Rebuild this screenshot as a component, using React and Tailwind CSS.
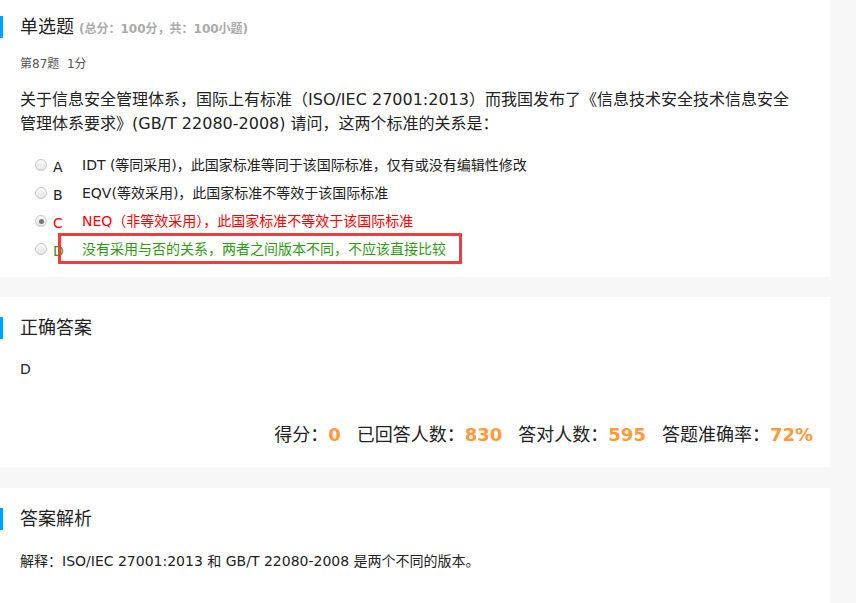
import React from "react";

const FONT = { fontFamily: '"DejaVu Sans", "Noto Sans CJK SC", sans-serif' };

const options = [
  { key: "A", text: "IDT (等同采用)，此国家标准等同于该国际标准，仅有或没有编辑性修改", color: "text-[#222]" },
  { key: "B", text: "EQV(等效采用)，此国家标准不等效于该国际标准", color: "text-[#222]" },
  { key: "C", text: "NEQ（非等效采用），此国家标准不等效于该国际标准", color: "text-[#ff0000]", checked: true },
  { key: "D", text: "没有采用与否的关系，两者之间版本不同，不应该直接比较", color: "text-[#2f9a12]", boxed: true },
];

const SectionTitle = ({ children, extra }) => (
  <div className="flex items-center h-[22px] border-l-[3px] border-[#0a9cff] pl-[17px]">
    <span className="text-[18px] text-[#222] leading-none">{children}</span>
    {extra && <span className="ml-[5px] text-[12px] text-[#aaa] font-bold leading-none mt-[3px]">{extra}</span>}
  </div>
);

const Radio = ({ checked }) => (
  <span className="w-[12px] h-[12px] rounded-full border border-[#c8c8c8] bg-gradient-to-b from-[#fafafa] to-[#e4e4e4] flex items-center justify-center">
    {checked && <span className="w-[5px] h-[5px] rounded-full bg-[#777]" />}
  </span>
);

const App = () => {
  return (
    <div className="w-[856px] h-[603px] overflow-hidden bg-[#f7f7f7]" style={FONT}>
      <div className="w-[830px]">
        {/* Question */}
        <div className="bg-white pt-[16px] h-[277px]">
          <SectionTitle extra="(总分：100分，共：100小题)">单选题</SectionTitle>
          <div className="px-[20px]">
            <div className="mt-[17px] text-[12px] text-[#555]">第87题&nbsp;&nbsp;1分</div>
            <div className="mt-[15px] text-[16px] leading-[24px] text-[#222] pr-[10px]">
              关于信息安全管理体系，国际上有标准（ISO/IEC 27001:2013）而我国发布了《信息技术安全技术信息安全管理体系要求》(GB/T 22080-2008) 请问，这两个标准的关系是：
            </div>
            <div className="mt-[19px] pl-[15px] flex flex-col gap-[8px]">
              {options.map((o) => (
                <div key={o.key} className="relative flex items-center h-[20px] text-[14px]">
                  <Radio checked={o.checked} />
                  <span className={`ml-[6px] w-[29px] mt-[4px] ${o.color}`}>{o.key}</span>
                  <span className={o.color}>{o.text}</span>
                  {o.boxed && (
                    <span className="absolute left-[23px] top-[-6px] w-[404px] h-[31px] border-[3px] border-[#f03c3c]" />
                  )}
                </div>
              ))}
            </div>
          </div>
        </div>

        {/* Correct answer */}
        <div className="bg-white mt-[20px] h-[170px] pt-[20px]">
          <SectionTitle>正确答案</SectionTitle>
          <div className="px-[20px] mt-[20px] text-[14px] text-[#222]">D</div>
          <div className="flex justify-end items-baseline pr-[17px] mt-[41px] text-[18px] text-[#222]">
            <span>得分：</span>
            <span className="font-bold text-[#ff9a3c]">0</span>
            <span className="ml-[16px]">已回答人数：</span>
            <span className="font-bold text-[#ff9a3c]">830</span>
            <span className="ml-[16px]">答对人数：</span>
            <span className="font-bold text-[#ff9a3c]">595</span>
            <span className="ml-[16px]">答题准确率：</span>
            <span className="font-bold text-[#ff9a3c]">72%</span>
          </div>
        </div>

        {/* Analysis */}
        <div className="bg-white mt-[21px] h-[200px] pt-[20px]">
          <SectionTitle>答案解析</SectionTitle>
          <div className="px-[20px] mt-[21px] text-[14px] text-[#222]">
            解释：ISO/IEC 27001:2013 和 GB/T 22080-2008 是两个不同的版本。
          </div>
        </div>
      </div>
    </div>
  );
};

export default App;
